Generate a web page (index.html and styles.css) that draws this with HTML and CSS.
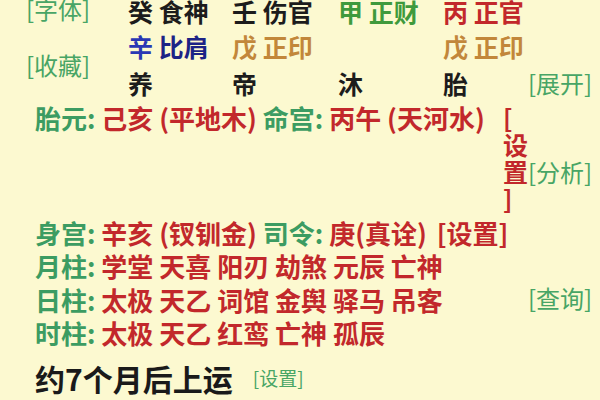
FILE: index.html
```html
<!DOCTYPE html>
<html lang="zh">
<head>
<meta charset="utf-8">
<link rel="stylesheet" href="styles.css">
</head>
<body>
<div class="page">
  <div class="top">
    <div class="lnk tl1">[字体]</div>
    <div class="cell c1 r1"><span class="blk">癸</span> <span class="blk">食神</span></div>
    <div class="cell c2 r1"><span class="blk">壬</span> <span class="blk">伤官</span></div>
    <div class="cell c3 r1"><span class="grn">甲</span> <span class="grn">正财</span></div>
    <div class="cell c4 r1"><span class="red">丙</span> <span class="red">正官</span></div>

    <div class="lnk tl2">[收藏]</div>
    <div class="cell c1 r2"><span class="blue">辛</span> <span class="navy">比肩</span></div>
    <div class="cell c2 r2"><span class="brn">戊</span> <span class="brn">正印</span></div>
    <div class="cell c4 r2"><span class="brn">戊</span> <span class="brn">正印</span></div>

    <div class="cell c1 r3 blk">养</div>
    <div class="cell c2 r3 blk">帝</div>
    <div class="cell c3 r3 blk">沐</div>
    <div class="cell c4 r3 blk">胎</div>
    <div class="lnk c5 r3">[展开]</div>
  </div>

  <div class="r4">
    <div class="r4-main"><span class="lbl">胎元:</span> <span class="red">己亥 (平地木)</span> <span class="lbl">命宫:</span> <span class="red">丙午 (天河水)</span></div>
    <div class="r4-vert red">[设置]</div>
    <div class="r4-side lnk">[分析]</div>
  </div>

  <div class="rows">
    <div class="row"><div class="main"><span class="lbl">身宫:</span> <span class="red">辛亥 (钗钏金)</span> <span class="lbl">司令:</span> <span class="red">庚(真诠)</span> <span class="red set">[设置]</span></div></div>
    <div class="row"><div class="main"><span class="lbl">月柱:</span> <span class="red">学堂 天喜 阳刃 劫煞 元辰 亡神</span></div></div>
    <div class="row"><div class="main"><span class="lbl">日柱:</span> <span class="red">太极 天乙 词馆 金舆 驿马 吊客</span></div><div class="side lnk">[查询]</div></div>
    <div class="row"><div class="main"><span class="lbl">时柱:</span> <span class="red">太极 天乙 红鸾 亡神 孤辰</span></div></div>
  </div>

  <div class="last"><span class="luck">约7个月后上运</span><span class="lnk small">[设置]</span></div>
</div>
</body>
</html>
```

FILE: styles.css
```css
html, body {
  margin: 0;
  padding: 0;
  background: #fcf9d0;
}
body {
  width: 600px;
  height: 400px;
  overflow: hidden;
  font-family: "Noto Sans CJK SC", "Noto Sans", sans-serif;
  font-weight: 700;
  font-size: 25px;
  color: #1c1c1c;
}
.page {
  margin-top: -6px;
}
.top {
  display: grid;
  grid-template-columns: 128px 104px 106px 105px 85px 1fr;
  grid-template-rows: 34px 36px 37px;
  align-items: center;
  white-space: nowrap;
}
.cell { line-height: 30px; }
.c1 { grid-column: 2; }
.c2 { grid-column: 3; }
.c3 { grid-column: 4; }
.c4 { grid-column: 5; }
.c5 { grid-column: 6; }
.r1 { grid-row: 1; }
.r2 { grid-row: 2; }
.r3 { grid-row: 3; }
.lnk {
  color: #48a565;
  font-weight: 400;
  font-size: 24px;
  line-height: 30px;
}
.tl1 { grid-column: 1; grid-row: 1; padding-left: 26px; align-self: start; }
.tl2 { grid-column: 1; grid-row: 2 / span 2; padding-left: 26px; }
.blk { color: #1c1c1c; }
.grn { color: #3f9a3c; }
.red { color: #c2282b; }
.blue { color: #2a38b4; }
.navy { color: #1c2386; }
.brn { color: #c2873a; }
.lbl { color: #3c9c62; }

.r4 {
  display: flex;
  margin-top: 3px;
  line-height: 27px;
}
.r4-main {
  width: 503px;
  padding-left: 35px;
  box-sizing: border-box;
  white-space: nowrap;
  font-size: 26px;
}
.r4-vert {
  width: 25px;
  font-size: 25px;
  line-break: anywhere;
  word-break: break-all;
}
.r4-side {
  padding-top: 54px;
  line-height: 27px;
}

.rows {
  margin-top: 4px;
}
.row {
  display: flex;
  line-height: 33.3px;
  white-space: nowrap;
}
.main {
  width: 528px;
  padding-left: 35px;
  box-sizing: border-box;
  font-size: 26px;
}
.set { margin-left: 4px; }

.last {
  margin-top: 12px;
  padding-left: 35px;
  display: flex;
  align-items: center;
  line-height: 34px;
}
.luck {
  font-size: 30px;
  color: #1a1a1a;
}
.small {
  font-size: 19px;
  margin-left: 20px;
}
```
